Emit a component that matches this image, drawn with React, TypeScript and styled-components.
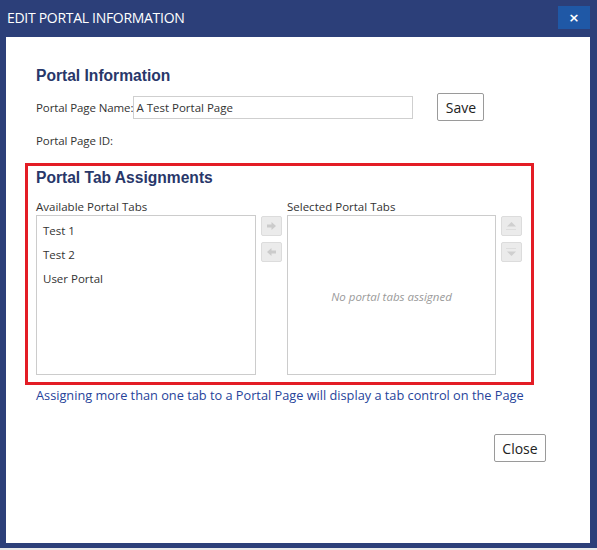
import styled, { createGlobalStyle } from 'styled-components';

const GlobalStyle = createGlobalStyle`
  html, body {
    margin: 0;
    padding: 0;
    background: #e9e9e9;
  }
  * {
    box-sizing: border-box;
  }
`;

const Dialog = styled.div`
  width: 597px;
  height: 548px;
  background: #2c3f79;
  padding: 0 7px 5px 6px;
  display: flex;
  flex-direction: column;
  font-family: 'Open Sans', 'Noto Sans', sans-serif;
`;

const TitleBar = styled.div`
  height: 37px;
  display: flex;
  align-items: center;
  justify-content: space-between;
  padding: 0 0 2px 1px;
`;

const Title = styled.h1`
  margin: 0;
  font-size: 14px;
  font-weight: 400;
  color: #ffffff;
  letter-spacing: -0.3px;
`;

const CloseX = styled.button`
  width: 32px;
  height: 23px;
  border: none;
  background: #1f58a6;
  color: #ffffff;
  font-family: 'DejaVu Sans', sans-serif;
  font-weight: 700;
  font-size: 13px;
  line-height: 1;
  padding: 0;
  display: flex;
  align-items: center;
  justify-content: center;
`;

const Body = styled.div`
  flex: 1;
  background: #ffffff;
  padding: 29px 13px 0 30px;
  font-size: 11.5px;
  color: #333333;
`;

const Heading = styled.h2`
  margin: 0;
  font-family: 'Liberation Sans', Arial, sans-serif;
  font-weight: 700;
  font-size: 15.6px;
  line-height: 20px;
  color: #28376a;
`;

const FieldRow = styled.div<{ $top: number }>`
  display: flex;
  align-items: center;
  height: 28px;
  margin-top: ${({ $top }) => $top}px;
`;

const Label = styled.span`
  font-size: 11.5px;
  letter-spacing: -0.1px;
  color: #333333;
  white-space: nowrap;
`;

const TextInput = styled.input`
  width: 280px;
  height: 23px;
  border: 1px solid #cfcfcf;
  padding: 0 2px;
  font-family: inherit;
  font-size: 11.5px;
  color: #333333;
  outline: none;
`;

const PlainButton = styled.button<{ $w: number; $h: number }>`
  width: ${({ $w }) => $w}px;
  height: ${({ $h }) => $h}px;
  border: 1px solid #9a9a9a;
  border-radius: 2px;
  background: #ffffff;
  font-family: inherit;
  font-size: 14px;
  color: #222222;
  padding: 0;
`;

const SaveButton = styled(PlainButton)`
  margin-left: 24px;
`;

const AssignBox = styled.section`
  margin: 9px 0 0 -11px;
  width: 509px;
  height: 222px;
  border: 3px solid #e31d25;
  padding: 2px 0 0 8px;
`;

const Lists = styled.div`
  display: grid;
  grid-template-columns: 220px 21px 209px 21px;
  column-gap: 5px;
  margin-top: 11px;
`;

const Column = styled.div`
  display: flex;
  flex-direction: column;
`;

const ListLabel = styled.span`
  font-size: 11.5px;
  line-height: 16px;
  color: #333333;
  white-space: nowrap;
`;

const ListBox = styled.ul`
  margin: 0;
  padding: 3px 0 0 0;
  list-style: none;
  height: 160px;
  border: 1px solid #cccccc;
  display: flex;
  flex-direction: column;
`;

const ListItem = styled.li`
  height: 24px;
  line-height: 24px;
  padding-left: 6px;
  font-size: 11.5px;
  color: #333333;
`;

const EmptyNote = styled.li`
  margin: auto;
  font-size: 11.5px;
  font-style: italic;
  color: #9a9a9a;
`;

const ButtonStack = styled.div`
  display: flex;
  flex-direction: column;
  gap: 6px;
  padding-top: 17px;
`;

const MoveButton = styled.button`
  width: 21px;
  height: 20px;
  border: 1px solid #dcdcdc;
  border-radius: 2px;
  background: #ebebeb;
  padding: 0;
  display: flex;
  align-items: center;
  justify-content: center;
`;

const Footnote = styled.p`
  margin: 2px 0 0 0;
  font-size: 12.75px;
  line-height: 17px;
  color: #26439a;
  white-space: nowrap;
`;

const Footer = styled.div`
  display: flex;
  justify-content: flex-end;
  margin-top: 30px;
  padding-right: 31px;
`;

function ArrowRight() {
  return (
    <svg width="11" height="10" viewBox="0 0 11 10" aria-hidden="true">
      <path d="M1 3.5H5.5V1L10 5L5.5 9V6.5H1Z" fill="#cbcbcb" />
    </svg>
  );
}

function ArrowLeft() {
  return (
    <svg width="11" height="10" viewBox="0 0 11 10" aria-hidden="true">
      <path d="M10 3.5H5.5V1L1 5L5.5 9V6.5H10Z" fill="#cbcbcb" />
    </svg>
  );
}

function ArrowUp() {
  return (
    <svg width="13" height="10" viewBox="0 0 13 10" aria-hidden="true">
      <path d="M6.5 1L11 5.5H2Z" fill="#cfcfcf" />
      <path d="M1.5 8.5H11.5" stroke="#cfcfcf" strokeWidth="1" strokeDasharray="1 1" />
    </svg>
  );
}

function ArrowDown() {
  return (
    <svg width="13" height="10" viewBox="0 0 13 10" aria-hidden="true">
      <path d="M1.5 1.5H11.5" stroke="#cfcfcf" strokeWidth="1" strokeDasharray="1 1" />
      <path d="M6.5 9L11 4.5H2Z" fill="#cfcfcf" />
    </svg>
  );
}

const AVAILABLE = ['Test 1', 'Test 2', 'User Portal'];

export default function App() {
  return (
    <>
      <GlobalStyle />
      <Dialog>
        <TitleBar>
          <Title>EDIT PORTAL INFORMATION</Title>
          <CloseX aria-label="Close">×</CloseX>
        </TitleBar>
        <Body>
          <Heading>Portal Information</Heading>
          <FieldRow $top={7}>
            <Label>Portal Page Name:</Label>
            <TextInput defaultValue="A Test Portal Page" />
            <SaveButton $w={47} $h={28}>Save</SaveButton>
          </FieldRow>
          <FieldRow $top={5}>
            <Label>Portal Page ID:</Label>
          </FieldRow>
          <AssignBox>
            <Heading>Portal Tab Assignments</Heading>
            <Lists>
              <Column>
                <ListLabel>Available Portal Tabs</ListLabel>
                <ListBox>
                  {AVAILABLE.map((name) => (
                    <ListItem key={name}>{name}</ListItem>
                  ))}
                </ListBox>
              </Column>
              <ButtonStack>
                <MoveButton aria-label="Add">
                  <ArrowRight />
                </MoveButton>
                <MoveButton aria-label="Remove">
                  <ArrowLeft />
                </MoveButton>
              </ButtonStack>
              <Column>
                <ListLabel>Selected Portal Tabs</ListLabel>
                <ListBox>
                  <EmptyNote>No portal tabs assigned</EmptyNote>
                </ListBox>
              </Column>
              <ButtonStack>
                <MoveButton aria-label="Move up">
                  <ArrowUp />
                </MoveButton>
                <MoveButton aria-label="Move down">
                  <ArrowDown />
                </MoveButton>
              </ButtonStack>
            </Lists>
          </AssignBox>
          <Footnote>Assigning more than one tab to a Portal Page will display a tab control on the Page</Footnote>
          <Footer>
            <PlainButton $w={52} $h={28}>Close</PlainButton>
          </Footer>
        </Body>
      </Dialog>
    </>
  );
}
